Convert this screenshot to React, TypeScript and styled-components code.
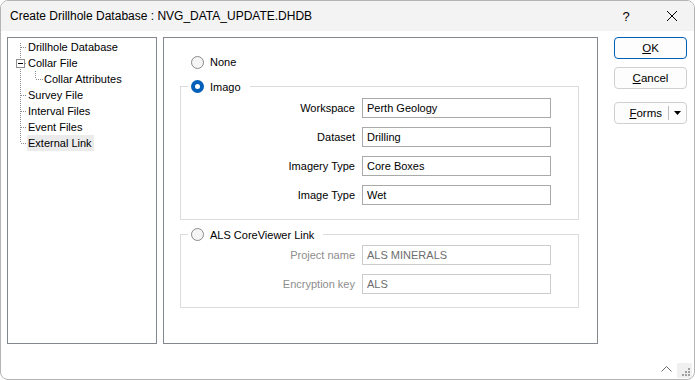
import React from "react";
import styled, { createGlobalStyle } from "styled-components";

const Global = createGlobalStyle`
  html, body { margin: 0; padding: 0; background: #ffffff; }
  body { width: 695px; height: 380px; overflow: hidden; font-family: "Liberation Sans", Arial, sans-serif; }
  * { box-sizing: border-box; }
`;

const Window = styled.div`
  width: 695px;
  height: 380px;
  border: 1px solid #b4b4b4;
  border-radius: 8px;
  overflow: hidden;
  background: #ffffff;
  display: flex;
  flex-direction: column;
`;

const TitleBar = styled.div`
  height: 30px;
  flex: none;
  background: #f3f3f3;
  display: flex;
  align-items: center;
  padding-left: 9px;
  font-family: "Liberation Sans", Arial, sans-serif;
  font-size: 12px;
  color: #000;
`;

const TitleText = styled.div`
  flex: 1;
`;

const HelpGlyph = styled.span`
  font-size: 13px;
  width: 20px;
  text-align: center;
  margin-right: 30px;
`;

const CloseBox = styled.span`
  display: flex;
  width: 12px;
  margin-right: 16px;
`;

const Body = styled.div`
  display: flex;
  padding: 6px 0 0 6px;
  flex: none;
`;

const TreePanel = styled.div`
  width: 150px;
  height: 307px;
  border: 1px solid #828790;
  padding-top: 1px;
  display: flex;
  flex-direction: column;
  font-size: 11px;
`;

const TreeRowBox = styled.div`
  display: flex;
  height: 16px;
  align-items: stretch;
`;

const TreeLabel = styled.span<{ $selected?: boolean }>`
  display: flex;
  align-items: center;
  padding: 0 2px 0 1px;
  background: ${(p) => (p.$selected ? "#ebebeb" : "transparent")};
  color: #000;
  white-space: nowrap;
`;

const ContentPanel = styled.div`
  width: 435px;
  height: 307px;
  margin-left: 6px;
  border: 1px solid #828790;
  padding: 16px 0 0 16px;
  font-size: 11px;
  display: flex;
  flex-direction: column;
`;

const RadioRow = styled.div`
  display: flex;
  align-items: center;
  height: 16px;
  padding-left: 11px;
  gap: 6px;
`;

const Radio = styled.span<{ $checked?: boolean }>`
  width: 13px;
  height: 13px;
  flex: none;
  border-radius: 50%;
  display: flex;
  align-items: center;
  justify-content: center;
  border: ${(p) => (p.$checked ? "none" : "1px solid #8a8a8a")};
  background: ${(p) => (p.$checked ? "#005fb8" : "#f5f5f5")};
  &::after {
    content: "";
    display: ${(p) => (p.$checked ? "block" : "none")};
    width: 5px;
    height: 5px;
    border-radius: 50%;
    background: #ffffff;
  }
`;

const Group = styled.fieldset<{ $mt: number; $pt: number; $pb: number }>`
  width: 399px;
  margin: ${(p) => p.$mt}px 0 0 0;
  padding: ${(p) => p.$pt}px 0 ${(p) => p.$pb}px 0;
  border: 1px solid #dcdcdc;
  min-width: 0;
`;

const Legend = styled.legend`
  display: flex;
  align-items: center;
  height: 17px;
  margin-left: 7px;
  padding: 0 9px 0 3px;
  gap: 6px;
  color: #000;
`;

const FieldGrid = styled.div`
  display: grid;
  grid-template-columns: 174px 189px;
  column-gap: 7px;
  row-gap: 9px;
`;

const FieldLabel = styled.label<{ $disabled?: boolean }>`
  text-align: right;
  align-self: center;
  color: ${(p) => (p.$disabled ? "#8d8d8d" : "#000")};
`;

const TextBox = styled.input<{ $disabled?: boolean }>`
  width: 189px;
  height: 20px;
  margin: 0;
  border: 1px solid ${(p) => (p.$disabled ? "#cccccc" : "#a9a9a9")};
  border-radius: 0;
  padding: 0 4px;
  font-family: "Liberation Sans", Arial, sans-serif;
  font-size: 11px;
  color: ${(p) => (p.$disabled ? "#6d6d6d" : "#000")};
  background: #ffffff;
  outline: none;
`;

const ButtonColumn = styled.div`
  width: 73px;
  margin-left: 16px;
  display: flex;
  flex-direction: column;
`;

const DialogButton = styled.button<{ $primary?: boolean; $mt: number }>`
  height: 22px;
  width: 73px;
  margin: ${(p) => p.$mt}px 0 0 0;
  padding: 0;
  border: 1px solid ${(p) => (p.$primary ? "#005fb8" : "#d0d0d0")};
  border-radius: 4px;
  background: #fdfdfd;
  font-family: "Liberation Sans", Arial, sans-serif;
  font-size: 11.5px;
  color: #000;
  display: flex;
  align-items: center;
  justify-content: center;
`;

const SplitButton = styled(DialogButton)`
  justify-content: flex-start;
`;

const SplitLabel = styled.span`
  flex: 1;
  text-align: right;
  padding-right: 6px;
`;

const SplitDivider = styled.span`
  width: 1px;
  align-self: stretch;
  margin: 3px 0;
  background: #bdbdbd;
`;

const SplitArrow = styled.span`
  width: 17px;
  display: flex;
  justify-content: center;
`;

const Footer = styled.div`
  flex: 1;
  display: flex;
  justify-content: flex-end;
  align-items: flex-end;
  padding: 0 2px 1px 0;
  gap: 5px;
`;

const Chevron = styled.span`
  display: flex;
  margin-bottom: 6px;
`;

type Kind = "first" | "mid" | "last";

const DOT = "#8c8c8c";

const Connector: React.FC<{ kind: Kind; expander?: boolean; child?: boolean }> = ({ kind, expander, child }) => {
  const w = child ? 35 : 19;
  const vTop = kind === "first" ? 4 : 0;
  const vBottom = kind === "last" ? 8 : 16;
  return (
    <svg width={w} height={16} style={{ flex: "none", display: "block" }} shapeRendering="crispEdges">
      <line x1={12.5} y1={vTop} x2={12.5} y2={vBottom} stroke={DOT} strokeDasharray="1 1" />
      {!child && !expander && (
        <line x1={13} y1={8.5} x2={19} y2={8.5} stroke={DOT} strokeDasharray="1 1" />
      )}
      {expander && (
        <>
          <line x1={17} y1={8.5} x2={19} y2={8.5} stroke={DOT} strokeDasharray="1 1" />
          <rect x={8.5} y={4.5} width={8} height={8} fill="#ffffff" stroke="#919191" />
          <line x1={10} y1={8.5} x2={15} y2={8.5} stroke="#000" />
        </>
      )}
      {child && (
        <>
          <line x1={27.5} y1={0} x2={27.5} y2={8} stroke={DOT} strokeDasharray="1 1" />
          <line x1={28} y1={8.5} x2={35} y2={8.5} stroke={DOT} strokeDasharray="1 1" />
        </>
      )}
    </svg>
  );
};

const treeItems: { label: string; kind: Kind; expander?: boolean; child?: boolean; selected?: boolean }[] = [
  { label: "Drillhole Database", kind: "first" },
  { label: "Collar File", kind: "mid", expander: true },
  { label: "Collar Attributes", kind: "mid", child: true },
  { label: "Survey File", kind: "mid" },
  { label: "Interval Files", kind: "mid" },
  { label: "Event Files", kind: "mid" },
  { label: "External Link", kind: "last", selected: true },
];

const imagoFields = [
  ["Workspace", "Perth Geology"],
  ["Dataset", "Drilling"],
  ["Imagery Type", "Core Boxes"],
  ["Image Type", "Wet"],
];

const alsFields = [
  ["Project name", "ALS MINERALS"],
  ["Encryption key", "ALS"],
];

export default function App() {
  return (
    <>
      <Global />
      <Window>
        <TitleBar>
          <TitleText>Create Drillhole Database : NVG_DATA_UPDATE.DHDB</TitleText>
          <HelpGlyph>?</HelpGlyph>
          <CloseBox>
            <svg width={12} height={12} viewBox="0 0 12 12">
              <path d="M1 1 L11 11 M11 1 L1 11" stroke="#000" strokeWidth={1} fill="none" />
            </svg>
          </CloseBox>
        </TitleBar>
        <Body>
          <TreePanel>
            {treeItems.map((it) => (
              <TreeRowBox key={it.label}>
                <Connector kind={it.kind} expander={it.expander} child={it.child} />
                <TreeLabel $selected={it.selected}>{it.label}</TreeLabel>
              </TreeRowBox>
            ))}
          </TreePanel>
          <ContentPanel>
            <RadioRow>
              <Radio />
              <span>None</span>
            </RadioRow>
            <Group $mt={8} $pt={3} $pb={14}>
              <Legend>
                <Radio $checked />
                <span>Imago</span>
              </Legend>
              <FieldGrid>
                {imagoFields.map(([l, v]) => (
                  <React.Fragment key={l}>
                    <FieldLabel>{l}</FieldLabel>
                    <TextBox readOnly value={v} />
                  </React.Fragment>
                ))}
              </FieldGrid>
            </Group>
            <Group $mt={6} $pt={2} $pb={13}>
              <Legend>
                <Radio />
                <span>ALS CoreViewer Link</span>
              </Legend>
              <FieldGrid>
                {alsFields.map(([l, v]) => (
                  <React.Fragment key={l}>
                    <FieldLabel $disabled>{l}</FieldLabel>
                    <TextBox $disabled readOnly value={v} />
                  </React.Fragment>
                ))}
              </FieldGrid>
            </Group>
          </ContentPanel>
          <ButtonColumn>
            <DialogButton $primary $mt={0}>
              <span><u>O</u>K</span>
            </DialogButton>
            <DialogButton $mt={8}>
              <span><u>C</u>ancel</span>
            </DialogButton>
            <SplitButton $mt={13}>
              <SplitLabel><u>F</u>orms</SplitLabel>
              <SplitDivider />
              <SplitArrow>
                <svg width={7} height={4} viewBox="0 0 7 4">
                  <path d="M0 0 H7 L3.5 4 Z" fill="#000" />
                </svg>
              </SplitArrow>
            </SplitButton>
          </ButtonColumn>
        </Body>
        <Footer>
          <Chevron>
            <svg width={11} height={6} viewBox="0 0 11 6">
              <path d="M0.5 5.5 L5.5 0.5 L10.5 5.5" stroke="#6a6a6a" strokeWidth={1} fill="none" />
            </svg>
          </Chevron>
          <svg width={15} height={15} viewBox="0 0 15 15" shapeRendering="crispEdges">
            <rect x={0} y={0} width={15} height={15} fill="#f0f0f0" />
            {[
              [11, 5],
              [8, 8],
              [11, 8],
              [5, 11],
              [8, 11],
              [11, 11],
            ].map(([x, y]) => (
              <rect key={`${x}-${y}`} x={x} y={y} width={2} height={2} fill="#a0a0a0" />
            ))}
          </svg>
        </Footer>
      </Window>
    </>
  );
}
